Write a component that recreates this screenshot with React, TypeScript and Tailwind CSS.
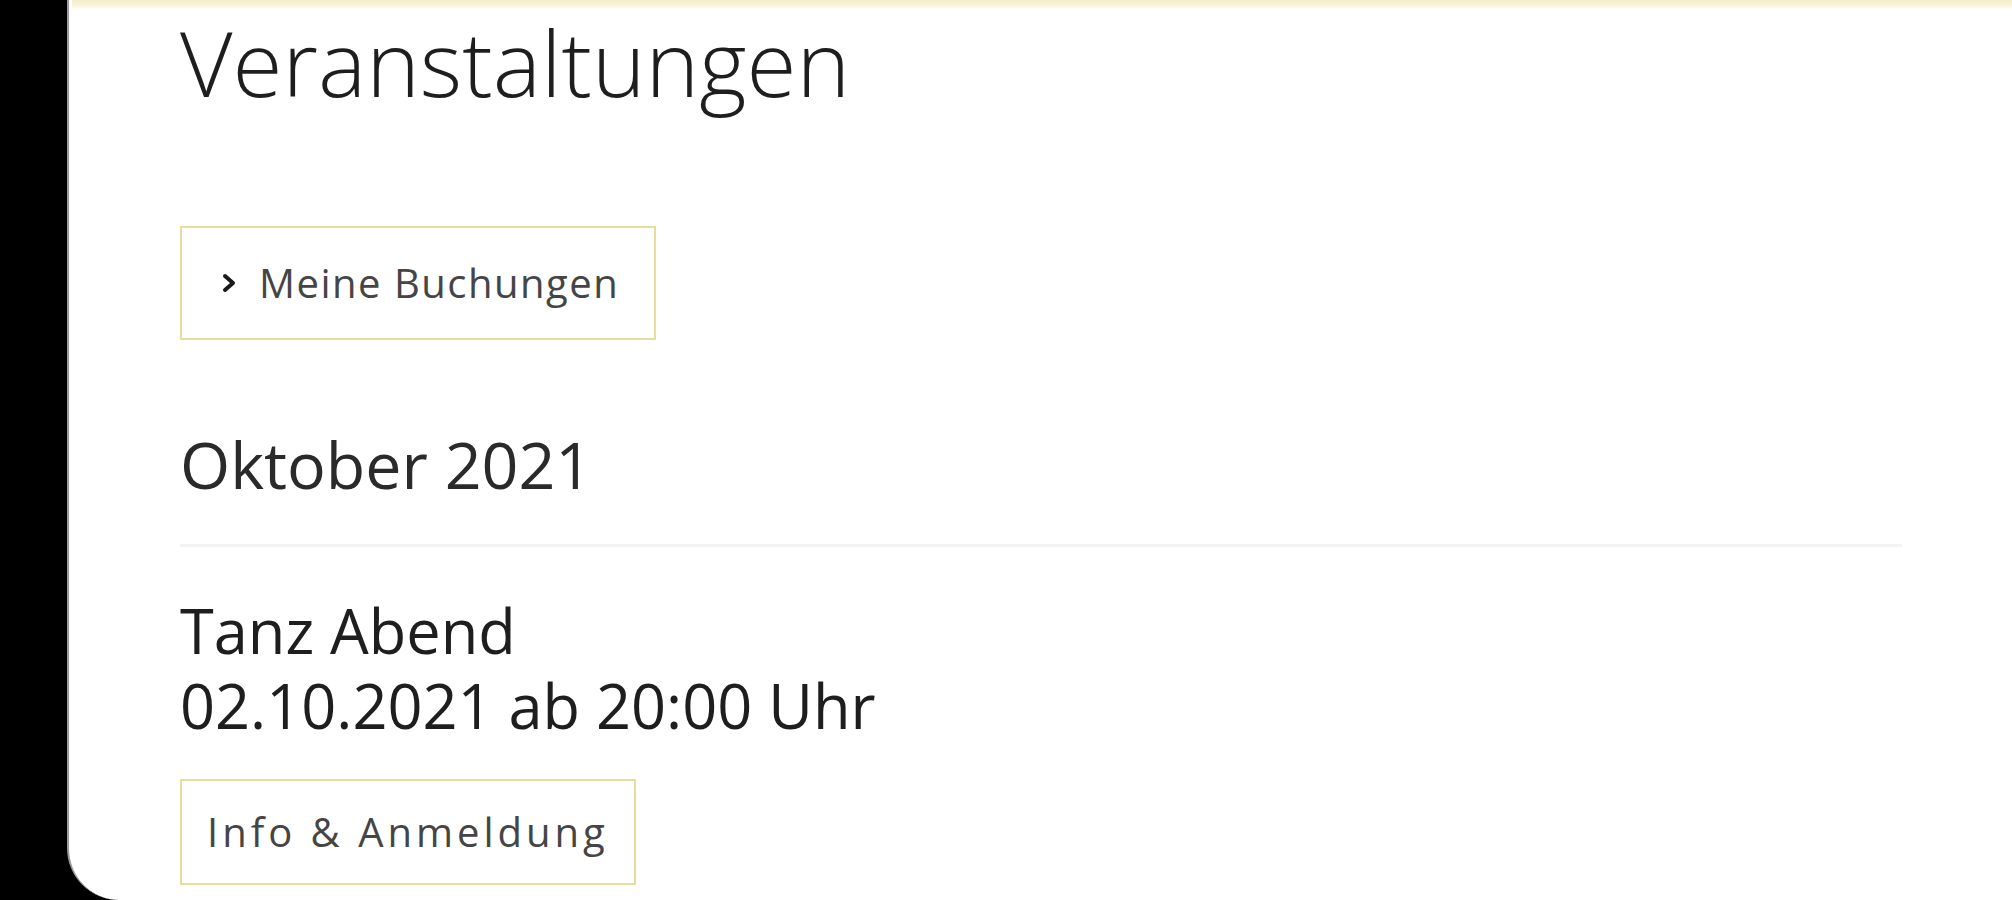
import React from 'react';

const font = { fontFamily: '"Open Sans", "Noto Sans", sans-serif' };

export default function App() {
  return (
    <div className="w-[2012px] h-[900px] bg-black overflow-hidden flex" style={font}>
      <div className="relative ml-[67px] flex-1 h-[900px] bg-white rounded-bl-[52px] border-l-2 border-[#9a9a9a] flex flex-col">
        {/* top accent */}
        <div className="absolute left-[3px] right-0 top-0 h-[10px] bg-gradient-to-b from-[#f3edcb] via-[#f7f3dc] to-white" />

        <div className="pl-[111px] pr-[110px] flex flex-col items-start">
          <h1 className="text-[91px] leading-[124px] font-light text-[#1e1e1e]">
            Veranstaltungen
          </h1>

          <button className="mt-[102px] h-[114px] pl-[40px] pr-[35px] flex items-center gap-[22px] border-2 border-[#e9dc9f] text-[40px] leading-none tracking-[1.5px] text-[#454545]">
            <svg width="15" height="20" viewBox="0 0 15 20" className="shrink-0">
              <path d="M3 3 L11 10 L3 17" fill="none" stroke="#1a1a1a" strokeWidth="4" strokeLinecap="round" strokeLinejoin="round" />
            </svg>
            <span>Meine Buchungen</span>
          </button>

          <h2 className="mt-[92px] text-[64.5px] leading-none text-[#2a2a2a]">Oktober 2021</h2>

          <div className="mt-[47px] self-stretch h-[3px] bg-[#f3f3f3]" />

          <div className="mt-[46px] text-[61.3px] leading-[75px] text-[#1e1e1e]">
            <div>Tanz Abend</div>
            <div>02.10.2021 ab 20:00 Uhr</div>
          </div>

          <button className="mt-[36px] h-[106px] px-[25px] flex items-center border-2 border-[#e9dc9f] text-[40px] leading-none tracking-[4px] text-[#454545]">
            Info &amp; Anmeldung
          </button>
        </div>
      </div>
    </div>
  );
}
